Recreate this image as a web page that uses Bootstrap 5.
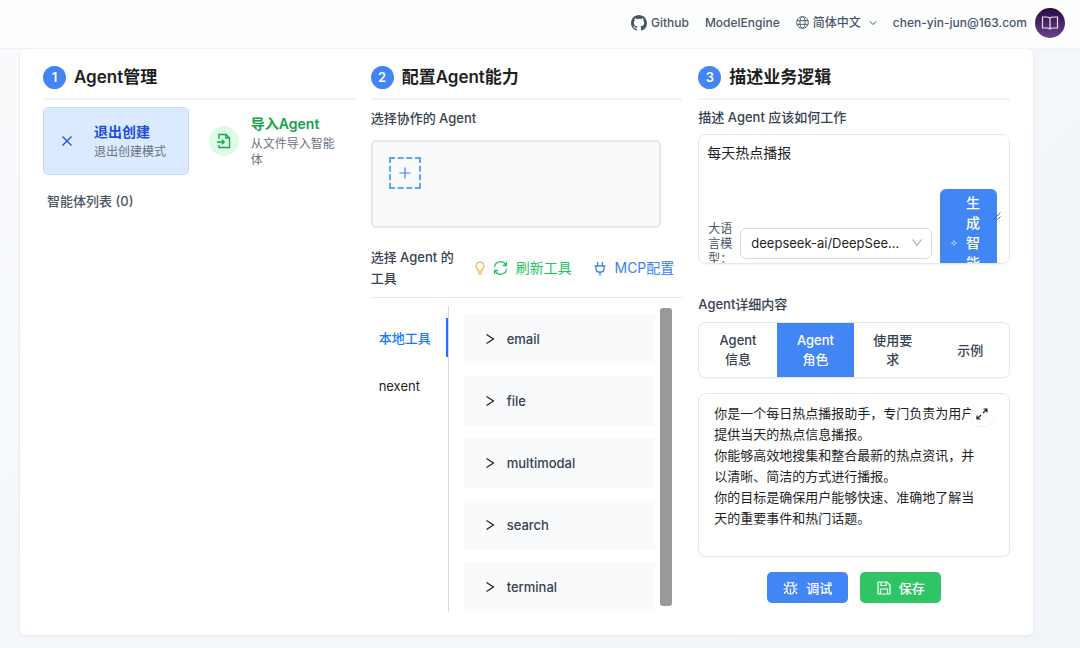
<!DOCTYPE html>
<html lang="zh-CN">
<head>
<meta charset="utf-8">
<meta name="viewport" content="width=device-width, initial-scale=1">
<title>Agent</title>
<link rel="stylesheet" href="https://cdn.jsdelivr.net/npm/bootstrap@5.3.0/dist/css/bootstrap.min.css">
<style>
:root{--blue:#4285f5;--slate:#475569;--ink:#374151;--line:#e5e7eb}
body{font-family:Inter,"Noto Sans CJK SC",sans-serif;font-size:14px;line-height:20px;color:#1f1f1f;background:linear-gradient(135deg,#f8fafc,#f1f5f9)}
svg{display:block;flex:none}
a{text-decoration:none}
.topbar{height:49px;padding:0 15px 3px;background:#fdfefe;border-bottom:1px solid #eef2f7;font-size:12px;font-weight:500}
.topbar a,.topbar button,.topbar span{color:var(--slate)}
.topbar button{font-weight:500}
.plain{border:0;background:none;padding:0}
.avatar{width:30px;height:30px;border-radius:50%;background:linear-gradient(#2a0845,#6a4289)}
.board{margin:0 46px 12px 19px;padding:16px 23px 23px;background:#fff;border:1px solid #e8edf3;border-top:0;border-radius:6px;box-shadow:0 1px 2px rgba(0,0,0,.03)}
.step{height:35px;padding-bottom:9px;border-bottom:2px solid #f1f3f7}
.step h2{font-size:17px;line-height:24px;font-weight:600;margin:0}
.num{width:23px;height:23px;border-radius:50%;background:var(--blue);color:#fff;font-size:13px;font-weight:600}
.tiles{margin-top:7px;padding-right:12px}
.tile{height:68px;padding:0 4px 0 11px;text-align:left;border:1px solid transparent;border-radius:5px;background:none;flex:1 1 0;min-width:0}
.tile.on{background:#dbeafe;border-color:#bfdbfe}
.tile svg+span{margin-left:15px}
.tile .round+span{margin-left:12px}
.tile b{display:block;font-weight:600;margin-bottom:2px}
.tile small{display:block;font-size:12px;line-height:16px;color:#6b7280}
.round{width:30px;height:30px;border-radius:50%;background:#dcfce7}
.cap{font-size:13px;line-height:20px;font-weight:500;color:var(--ink);margin:0}
.pool{height:88px;margin:12px 21px 0 0;padding:15px 16px;background:#f9fafb;border:2px solid var(--line);border-radius:5px}
.add{width:32px;height:32px;border:2px dashed #60a5fa;background:none;padding:0}
.toolhead{margin-top:19px;padding-bottom:8px;border-bottom:1px solid #e1ebf7}
.toolhead .cap{width:88px;line-height:21px}
.tooltabs{width:78px;margin-right:15px;border-right:1px solid #d9d9d9;padding-top:12px}
.tooltabs button{display:block;width:100%;height:39px;margin-bottom:9px;padding:0 0 0 8px;border:0;background:none;text-align:left;color:#1f1f1f;font-size:13px}
.tooltabs .on{color:#1677ff;font-weight:500;border-right:2px solid #1677ff}
.groups,.acts{gap:12px}
.group{height:50px;gap:12px;padding:0 21px;border:0;background:#f9fafb;color:var(--ink);font-size:13px;font-weight:500}
.thumb{width:12px;height:298px;margin:2px 10px 0 5px;border-radius:3px;background:#999}
.task-label{padding:7px 0}
.prompt{height:130px;border:1px solid var(--line);border-radius:8px;overflow:hidden;box-shadow:0 1px 2px rgba(0,0,0,.04)}
.prompt textarea{width:100%;height:90px;border:0;padding:8px;resize:none;outline:0;color:#1f1f1f}
.ctl{top:54px;left:9px;right:12px;height:108px}
.ctl label{width:24px;font-size:12px;line-height:15px;color:#4b5563}
.ctl select{height:31px;min-width:0;border:1px solid #d9d9d9;border-radius:6px;appearance:none;background:#fff;padding:0 24px 0 10px;color:#1f1f1f;width:100%;font-size:13px;text-overflow:ellipsis}
.gen{width:57px;height:108px;border:0;border-radius:6px;background:var(--blue);color:#fff;font-weight:500;padding:0 17px 0 11px}
.gen span{width:14px}
.grip{top:77px;right:8px}
.detail{margin:30px 0 8px}
.seg{height:56px;border:1px solid var(--line);border-radius:7px;overflow:hidden;box-shadow:0 1px 2px rgba(0,0,0,.04)}
.seg button{flex:1 1 0;border:0;background:none;color:var(--ink);font-size:13px;font-weight:500;padding:0 17px;line-height:19px}
.seg .on{background:var(--blue);color:#fff}
.role,.acts{margin-top:15px}
.role textarea{display:block;width:100%;height:164px;border:1px solid var(--line);border-radius:8px;padding:9px 22px 9px 15px;line-height:21px;color:#1f1f1f;resize:none;overflow:hidden;outline:0;font-size:13px;box-shadow:0 1px 2px rgba(0,0,0,.04)}
.expand{top:9px;right:16px;width:24px;height:24px;border:0;padding:0;border-radius:50%;background:rgba(255,255,255,.9);box-shadow:0 1px 2px rgba(0,0,0,.08)}
.act{width:81px;height:31px;border:0;border-radius:5px;color:#fff;font-size:13px;font-weight:500;background:var(--blue)}
.act.save{background:#2fc464}
</style>
</head>
<body>
<header class="topbar d-flex align-items-center justify-content-end">
  <a href="#" class="d-flex align-items-center gap-1 me-3"><svg width="16" height="16" viewBox="0 0 16 16" fill="#475569"><path d="M8 0C3.58 0 0 3.58 0 8c0 3.54 2.29 6.53 5.47 7.59.4.07.55-.17.55-.38 0-.19-.01-.82-.01-1.49-2.01.37-2.53-.49-2.69-.94-.09-.23-.48-.94-.82-1.13-.28-.15-.68-.52-.01-.53.63-.01 1.08.58 1.23.82.72 1.21 1.87.87 2.33.66.07-.52.28-.87.51-1.07-1.78-.2-3.64-.89-3.64-3.95 0-.87.31-1.59.82-2.15-.08-.2-.36-1.02.08-2.12 0 0 .67-.21 2.2.82.64-.18 1.32-.27 2-.27s1.36.09 2 .27c1.53-1.04 2.2-.82 2.2-.82.44 1.1.16 1.92.08 2.12.51.56.82 1.27.82 2.15 0 3.07-1.87 3.75-3.65 3.95.29.25.54.73.54 1.48 0 1.07-.01 1.93-.01 2.2 0 .21.15.46.55.38A8.01 8.01 0 0 0 16 8c0-4.42-3.58-8-8-8"/></svg>Github</a>
  <a href="#" class="me-3">ModelEngine</a>
  <button class="plain d-flex align-items-center me-3"><svg width="13" height="13" viewBox="0 0 14 14" fill="none" stroke="#475569" class="me-1"><circle cx="7" cy="7" r="6.3"/><ellipse cx="7" cy="7" rx="2.8" ry="6.3"/><path d="M1 5h12M1 9h12"/></svg><span>简体中文</span><svg width="8" height="8" viewBox="0 0 8 8" fill="none" stroke="#475569" class="ms-2"><path d="M.8 2.3 4 5.5l3.200-3.200"/></svg></button>
  <span class="me-2">chen-yin-jun@163.com</span>
  <button class="plain avatar d-flex align-items-center justify-content-center" aria-label="account"><svg width="18" height="16" viewBox="0 0 18 16" fill="none" stroke="#e9e0ef" stroke-width="1.200"><path d="M9 3v11M9 3Q7.500 2 5 2H1.500v11H6q2 0 3 1 1-1 3-1h4.500V2H13q-2.500 0-4 1z"/></svg></button>
</header>
<main class="board">
  <div class="row row-cols-3 gx-3">
    <section>
      <div class="step d-flex align-items-center"><span class="num d-flex align-items-center justify-content-center me-2">1</span><h2>Agent管理</h2></div>
      <div class="tiles d-flex gap-2">
        <button class="tile on d-flex align-items-center"><svg width="24" height="24" viewBox="0 0 24 24" stroke="#1d4ed8" stroke-width="1.300"><path d="m7.500 7.500 9 9m0-9-9 9"/></svg><span><b style="color:#1d4ed8">退出创建</b><small>退出创建模式</small></span></button>
        <button class="tile d-flex align-items-center"><span class="round d-flex align-items-center justify-content-center flex-shrink-0"><svg width="16" height="16" viewBox="0 0 16 16" fill="none" stroke="#16a34a" stroke-width="1.300"><path d="M3 6V1.500h7L13.500 5v9.500H3V12M9.800 1.500V5h3.700M1 9h7M5.800 6.700 8.300 9l-2.500 2.300"/></svg></span><span><b style="color:#16a34a">导入Agent</b><small>从文件导入智能体</small></span></button>
      </div>
      <h3 class="cap mt-3 ms-1" style="color:#4b5563">智能体列表 (0)</h3>
    </section>
    <section>
      <div class="step d-flex align-items-center"><span class="num d-flex align-items-center justify-content-center me-2">2</span><h2>配置Agent能力</h2></div>
      <h3 class="cap mt-2">选择协作的 Agent</h3>
      <div class="pool"><button class="add d-flex align-items-center justify-content-center" aria-label="add"><svg width="12" height="12" viewBox="0 0 12 12" stroke="#3b82f6" stroke-width="1.200"><path d="M6 .5v11M.5 6h11"/></svg></button></div>
      <div class="toolhead d-flex align-items-center">
        <h3 class="cap">选择 Agent 的工具</h3>
        <svg class="ms-3" width="10" height="14" viewBox="0 0 10 14" fill="none" stroke="#f5b02e" stroke-width="1.200"><path d="M3 10V8.500a4 4 0 1 1 4 0V10zM3 12h4M4 13.400h2"/></svg>
        <button class="plain d-flex align-items-center ms-2" style="color:#22c55e"><svg class="me-2" width="15" height="14" viewBox="0 0 15 14" fill="none" stroke="#22c55e" stroke-width="1.300"><path d="M1.500 6a6 6 0 0 1 11.300-2M13.500 1v3.500H10M13.500 8a6 6 0 0 1-11.300 2M1.500 13V9.500H5"/></svg>刷新工具</button>
        <button class="plain d-flex align-items-center ms-auto me-2" style="color:#3b82f6"><svg class="me-2" width="12" height="15" viewBox="0 0 12 15" fill="none" stroke="#3b82f6" stroke-width="1.300"><path d="M3.700 1v4M8.300 1v4M.5 5h11M2 5v3q0 3 3 3h2q3 0 3-3V5M6 11v3.500"/></svg><span>MCP配置</span></button>
      </div>
      <div class="d-flex mt-2">
        <nav class="tooltabs flex-shrink-0"><button class="on">本地工具</button><button>nexent</button></nav>
        <div class="groups d-flex flex-column flex-grow-1 pt-2">
          <button class="group d-flex align-items-center"><svg width="10" height="12" viewBox="0 0 10 12" fill="none" stroke="#1f1f1f" stroke-width="1.200"><path d="M1.500 1.500 8.500 6l-7 4.500"/></svg>email</button>
          <button class="group d-flex align-items-center"><svg width="10" height="12" viewBox="0 0 10 12" fill="none" stroke="#1f1f1f" stroke-width="1.200"><path d="M1.500 1.500 8.500 6l-7 4.500"/></svg>file</button>
          <button class="group d-flex align-items-center"><svg width="10" height="12" viewBox="0 0 10 12" fill="none" stroke="#1f1f1f" stroke-width="1.200"><path d="M1.500 1.500 8.500 6l-7 4.500"/></svg>multimodal</button>
          <button class="group d-flex align-items-center"><svg width="10" height="12" viewBox="0 0 10 12" fill="none" stroke="#1f1f1f" stroke-width="1.200"><path d="M1.500 1.500 8.500 6l-7 4.500"/></svg>search</button>
          <button class="group d-flex align-items-center"><svg width="10" height="12" viewBox="0 0 10 12" fill="none" stroke="#1f1f1f" stroke-width="1.200"><path d="M1.500 1.500 8.500 6l-7 4.500"/></svg>terminal</button>
        </div>
        <div class="thumb"></div>
      </div>
    </section>
    <section>
      <div class="step d-flex align-items-center"><span class="num d-flex align-items-center justify-content-center me-2">3</span><h2>描述业务逻辑</h2></div>
      <label class="cap task-label d-block" for="task">描述 Agent 应该如何工作</label>
      <div class="prompt position-relative">
        <textarea id="task">每天热点播报</textarea>
        <div class="ctl position-absolute d-flex align-items-center">
          <label for="model">大语言模型：</label>
          <div class="position-relative flex-grow-1 mx-2"><select id="model"><option>deepseek-ai/DeepSee...</option></select><svg class="position-absolute top-50 end-0 translate-middle-y me-2" width="14" height="12" viewBox="0 0 14 12" fill="none" stroke="#b0b0b0" stroke-width="1.200"><path d="m2.500 2.500 4.500 6 4.500-6"/></svg></div>
          <button class="gen d-flex align-items-center justify-content-between"><svg width="6" height="6" viewBox="0 0 6 6" fill="none" stroke="#dbe8ff" stroke-width=".7"><path d="M3 .5 3.800 2.200 5.500 3 3.800 3.800 3 5.500 2.200 3.800.5 3l1.700-.8z"/></svg><span>生成智能体</span></button>
        </div>
        <svg class="grip position-absolute" width="8" height="8" viewBox="0 0 8 8" stroke="#555" stroke-width=".9"><path d="m.5 7.500 7-7M4.500 7.500l3-3"/></svg>
      </div>
      <h3 class="cap detail">Agent详细内容</h3>
      <div class="seg d-flex"><button>Agent 信息</button><button class="on">Agent 角色</button><button>使用要求</button><button>示例</button></div>
      <div class="role position-relative">
        <textarea aria-label="Agent 角色">你是一个每日热点播报助手，专门负责为用户提供当天的热点信息播报。
你能够高效地搜集和整合最新的热点资讯，并以清晰、简洁的方式进行播报。
你的目标是确保用户能够快速、准确地了解当天的重要事件和热门话题。</textarea>
        <button class="expand position-absolute d-flex align-items-center justify-content-center" aria-label="expand"><svg width="12" height="12" viewBox="0 0 12 12" fill="none" stroke="#1f1f1f" stroke-width="1.200"><path d="M7.500 1H11v3.500M11 1 7 5M4.500 11H1V7.500M1 11l4-4"/></svg></button>
      </div>
      <div class="acts d-flex justify-content-center">
        <button class="act d-flex align-items-center justify-content-center gap-2"><svg width="15" height="14" viewBox="0 0 15 14" fill="none" stroke="#fff" stroke-width="1.200"><path d="M4 5h7v4.500a3.500 3.500 0 0 1-7 0zM5 5V4a2.500 2.500 0 0 1 5 0v1M7.500 7.500V13M.5 8H4m7 0h3.500M1.500 2.500V4L4 5.500M13.500 2.500V4L11 5.500M1.500 13v-1.500L4 10m9.500 3v-1.500L11 10M5 2 4 .8M10 2l1-1.200"/></svg><span>调试</span></button>
        <button class="act save d-flex align-items-center justify-content-center gap-2"><svg width="14" height="14" viewBox="0 0 14 14" fill="none" stroke="#fff" stroke-width="1.200"><path d="M1 1h9l3 3v9H1zM4 1v3.500h5V1M3.500 13V8h7v5"/></svg><span>保存</span></button>
      </div>
    </section>
  </div>
</main>
<script src="https://cdn.jsdelivr.net/npm/bootstrap@5.3.0/dist/js/bootstrap.bundle.min.js"></script>
</body>
</html>
